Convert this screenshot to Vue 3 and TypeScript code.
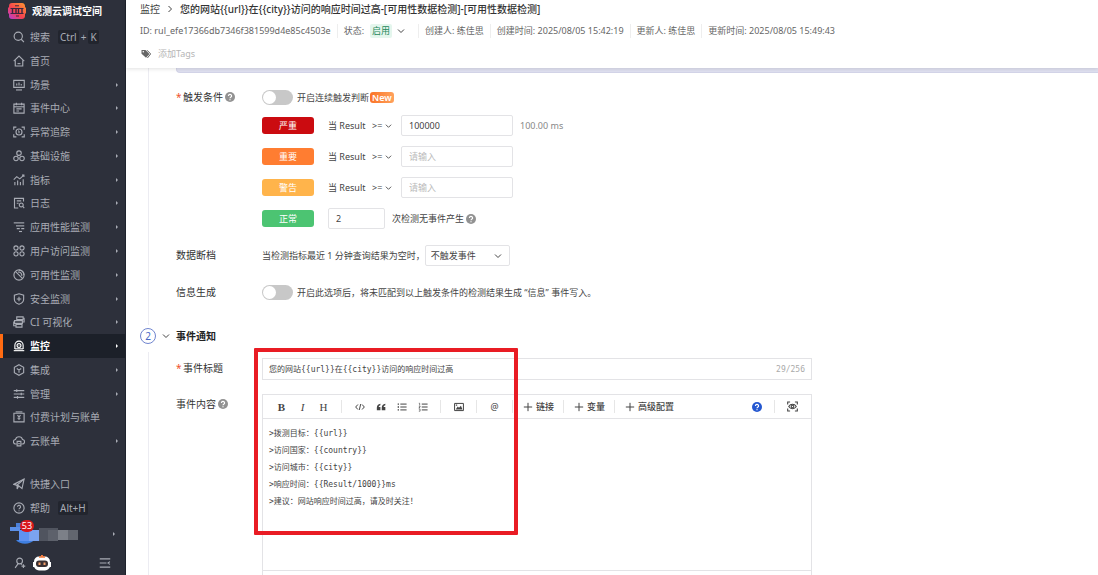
<script setup lang="ts">
import { ref } from 'vue'

interface NavItem {
  label: string
  icon: string
  arrow: boolean
  active?: boolean
}

interface Level {
  key: string
  label: string
  value: string
  unit?: string
}

const icons: Record<string, string[]> = {
  search: ['M7 1.5a5.5 5.5 0 1 0 0 11a5.5 5.5 0 1 0 0-11z', 'M11 11l3.6 3.8'],
  home: ['M1 8.2L8 1.4l7 6.8', 'M3 7v7.6h10V7', 'M6 11.5h4'],
  scene: ['M1 1.8h14v9.4H1z', 'M4 14.6h8', 'M5 6v2.6M8 4.8v3.8M11 6.6v2'],
  event: ['M1.2 2.8h13.6v12H1.2z', 'M1.2 6.4h13.6', 'M4.5 1v3.4M11.5 1v3.4', 'M4.5 9.2h7M4.5 12h3.5'],
  trace: ['M1 5V1.5h3.5M11.5 1.5H15V5M15 11v3.5h-3.5M4.5 14.5H1V11', 'M8 4a4 4 0 1 0 0 8a4 4 0 1 0 0-8z', 'M8 6.5v3M7 7l1-.6'],
  infra: ['M8 1.2a3 3 0 1 0 0 6a3 3 0 1 0 0-6z', 'M4 8.4a3 3 0 1 0 0 6a3 3 0 1 0 0-6z', 'M12 8.4a3 3 0 1 0 0 6a3 3 0 1 0 0-6z'],
  metric: ['M2.5 15v-4.5M6.2 15V8.5M9.9 15v-4.5M13.6 15V7', 'M1 7.5l4-4 4 3 5.5-5', 'M12 1.5h2.5V4'],
  log: ['M14 6V1.8H2v12.8h5', 'M5 5.2h6M5 8.4h2.5', 'M11 8a2.6 2.6 0 1 0 0 5.2a2.6 2.6 0 1 0 0-5.2z', 'M13 12.5l2 2.3'],
  apm: ['M1 2.5h14', 'M4 6.5h11', 'M5 10.2h4M11 10.2h4', 'M8 14h4'],
  rum: ['M4 1.2a2.8 2.8 0 1 0 0 5.6a2.8 2.8 0 1 0 0-5.6z', 'M12 1.2a2.8 2.8 0 1 0 0 5.6a2.8 2.8 0 1 0 0-5.6z', 'M4 9a2.8 2.8 0 1 0 0 5.6A2.8 2.8 0 1 0 4 9z', 'M12 9a2.8 2.8 0 1 0 0 5.6A2.8 2.8 0 1 0 12 9z'],
  avail: ['M8 1.2a6.8 6.8 0 1 0 0 13.6a6.8 6.8 0 1 0 0-13.6z', 'M3.5 3.5l9 9', 'M6.5 4.2c3-.8 5.6 2 5.2 5', 'M8 1.5c4 0 6.5 3 6.5 6.5'],
  security: ['M8 1l6.2 1.8v5.4c0 3.2-2.7 5.5-6.2 6.8c-3.5-1.3-6.2-3.6-6.2-6.8V2.8z', 'M8 5v6M5 8h6'],
  ci: ['M5 1.2h8.5v3.6H5z', 'M2 6.2h10.5v3.6H2z', 'M4 11.2h8v3.6H4z', 'M13.5 3h1.3v5h-2.3M2 8H1v5h3'],
  monitor: ['M2.5 12V7a5.5 5.5 0 0 1 11 0v5', 'M1 14.2h14', 'M2.5 11.8h11', 'M8 4.8a2.6 2.6 0 1 0 0 5.2a2.6 2.6 0 1 0 0-5.2z', 'M8 7v.6'],
  integrate: ['M8 1l6.2 3.5v7L8 15l-6.2-3.5v-7z', 'M5 6l3 2 3-2M8 8v3.8'],
  manage: ['M1 3.5h14M1 8h14M1 12.5h14', 'M5 1.8v3.4M11 6.3v3.4M6 10.8v3.4'],
  billing: ['M1.2 3h13.6v11.5H1.2z', 'M3.5 1.2h9', 'M6 5.5l2 2.5 2-2.5M8 8v4M6 9.6h4'],
  cloud: ['M5 12H3.8a3 3 0 0 1-.4-6a4.7 4.7 0 0 1 9.2 0a3 3 0 0 1-.4 6H11', 'M5.5 8.5h5v6h-5z', 'M7 11.5h2'],
  send: ['M1 8.5L14.8 1.5L12 14l-4.5-3.5z', 'M14.8 1.5L5.5 9.5v5l2-4'],
  help: ['M8 1.2a6.8 6.8 0 1 0 0 13.6a6.8 6.8 0 1 0 0-13.6z', 'M6 6.4a2 2 0 1 1 2.9 1.8c-.6.3-.9.7-.9 1.4', 'M8 11.3v.9'],
  invite: ['M7.5 1.5a3.8 3.8 0 1 0 0 7.6a3.8 3.8 0 1 0 0-7.6z', 'M5.5 8.8L1.5 14.5', 'M9.5 8.8l1 1.4', 'M10 12.2h5M12.5 9.7v5'],
  collapse: ['M1 2.5h14M1 8h9M1 13.5h14', 'M14.5 6.2L12 8l2.5 1.8'],
  scan: ['M1 5V1.5h3.5M11.5 1.5H15V5M15 11v3.5h-3.5M4.5 14.5H1V11', 'M2.5 8c2.8-4.3 8.2-4.3 11 0c-2.8 4.3-8.2 4.3-11 0z', 'M8 6.2a1.8 1.8 0 1 0 0 3.6a1.8 1.8 0 1 0 0-3.6z'],
}

const nav: NavItem[] = [
  { label: '首页', icon: 'home', arrow: false },
  { label: '场景', icon: 'scene', arrow: true },
  { label: '事件中心', icon: 'event', arrow: true },
  { label: '异常追踪', icon: 'trace', arrow: true },
  { label: '基础设施', icon: 'infra', arrow: true },
  { label: '指标', icon: 'metric', arrow: true },
  { label: '日志', icon: 'log', arrow: true },
  { label: '应用性能监测', icon: 'apm', arrow: true },
  { label: '用户访问监测', icon: 'rum', arrow: true },
  { label: '可用性监测', icon: 'avail', arrow: true },
  { label: '安全监测', icon: 'security', arrow: true },
  { label: 'CI 可视化', icon: 'ci', arrow: true },
  { label: '监控', icon: 'monitor', arrow: true, active: true },
  { label: '集成', icon: 'integrate', arrow: true },
  { label: '管理', icon: 'manage', arrow: true },
  { label: '付费计划与账单', icon: 'billing', arrow: false },
  { label: '云账单', icon: 'cloud', arrow: true },
]

const levels = ref<Level[]>([
  { key: 'critical', label: '严重', value: '100000', unit: '100.00 ms' },
  { key: 'error', label: '重要', value: '' },
  { key: 'warning', label: '警告', value: '' },
])

const meta = ['创建人: 练佳思', '创建时间: 2025/08/05 15:42:19', '更新人: 练佳思', '更新时间: 2025/08/05 15:49:43']
const inserts = ['链接', '变量', '高级配置']

const continuous = ref(false)
const infoEvents = ref(false)
const recoverCount = ref('2')
const title = ref('您的网站{{url}}在{{city}}访问的响应时间过高')
const content = ref(
  [
    '>拨测目标：{{url}}',
    '>访问国家：{{country}}',
    '>访问城市：{{city}}',
    '>响应时间：{{Result/1000}}ms',
    '>建议：网站响应时间过高，请及时关注！',
  ].join('\n'),
)
const crumb = '您的网站{{url}}在{{city}}访问的响应时间过高-[可用性数据检测]-[可用性数据检测]'
</script>

<template>
  <div class="app">
    <aside class="sidebar">
      <div class="brand">
        <svg class="logo" viewBox="0 0 18 16" aria-hidden="true">
          <defs>
            <linearGradient id="brandFill" x1="0" y1="1" x2="1" y2="0">
              <stop offset="0" stop-color="#b13be0" />
              <stop offset=".45" stop-color="#f5434f" />
              <stop offset="1" stop-color="#ff9a2e" />
            </linearGradient>
          </defs>
          <path d="M4 0h10c2 0 3 1.500 3 3v1.500h1v6h-1V13c0 2-1.500 3-3 3H4c-2 0-3-1-3-3v-2.500H0v-6h1V3c0-2 1-3 3-3z" fill="url(#brandFill)" />
          <path d="M2.500 5.500h13M2.500 10.500h13M7 2.800h4" stroke="#3a2640" fill="none" />
          <path d="M4.500 6v4M8 6v4M10.500 6v4M14 6v4" stroke="#3a2640" stroke-width="1.400" />
          <path d="M8 13h3" stroke="#3a2640" />
        </svg>
        <strong>观测云调试空间</strong>
      </div>
      <button class="item" type="button">
        <svg class="icon" viewBox="0 0 16 16"><path v-for="d in icons.search" :key="d" :d="d" /></svg>
        <span>搜索</span>
        <span class="keys"><kbd>Ctrl</kbd>+<kbd>K</kbd></span>
      </button>
      <nav class="nav">
        <a v-for="n in nav" :key="n.label" href="#" class="item" :class="{ active: n.active }">
          <svg class="icon" viewBox="0 0 16 16"><path v-for="d in icons[n.icon]" :key="d" :d="d" /></svg>
          <span>{{ n.label }}</span>
          <i v-if="n.arrow" class="arrow"></i>
        </a>
      </nav>
      <div class="bottom">
        <a href="#" class="item">
          <svg class="icon" viewBox="0 0 16 16"><path v-for="d in icons.send" :key="d" :d="d" /></svg>
          <span>快捷入口</span>
        </a>
        <a href="#" class="item">
          <svg class="icon" viewBox="0 0 16 16"><path v-for="d in icons.help" :key="d" :d="d" /></svg>
          <span>帮助</span>
          <span class="keys"><kbd>Alt+H</kbd></span>
        </a>
        <div class="item user">
          <svg class="avatar" viewBox="0 0 70 22" aria-hidden="true">
            <path d="M6 0h16v6H6z" fill="#4a7fd8" />
            <path d="M0 4h10v4H0z" fill="#5b8fe6" />
            <path d="M6 17h18c-4 5-14 5-18 0z" fill="#3f7fe0" />
            <path d="M9 7h20v11H9z" fill="#5f92f2" />
            <path d="M19 7h10v11H19z" fill="#7ba3f0" />
            <path d="M29 5h19v13H29z" fill="#50545f" />
            <path d="M38 7h10v11H38z" fill="#5d616b" />
            <path d="M48 7h10v10H48z" fill="#7c8088" />
            <path d="M58 7h10v10H58z" fill="#62666f" />
          </svg>
          <span class="badge">53</span>
          <i class="arrow"></i>
        </div>
        <div class="tools">
          <button type="button" aria-label="邀请成员">
            <svg class="icon" viewBox="0 0 16 16"><path v-for="d in icons.invite" :key="d" :d="d" /></svg>
          </button>
          <button type="button" aria-label="智能助手">
            <svg class="robot" viewBox="0 0 18 16">
              <rect x="1" y="1.500" width="16" height="14" rx="5" fill="#fff" />
              <path d="M0 7h2v5H0zM16 7h2v5h-2z" fill="#fff" />
              <path d="M6 1.200h6v1.600H6zM8 0h2v2H8z" fill="#f47b3d" />
              <rect x="3" y="5.500" width="12" height="6.500" rx="3" fill="#3b3032" />
              <path d="M5.500 7.500h2v2.500h-2zM10.500 7.500h2v2.500h-2z" fill="#f6a06a" />
            </svg>
          </button>
          <button class="collapse" type="button" aria-label="收起菜单">
            <svg class="icon" viewBox="0 0 16 16"><path v-for="d in icons.collapse" :key="d" :d="d" /></svg>
          </button>
        </div>
      </div>
    </aside>

    <main class="main">
      <header class="header">
        <div class="crumbs">
          <a href="#">监控</a>
          <svg class="chev" viewBox="0 0 8 8"><path d="M2.500 1l3 3-3 3" /></svg>
          <span class="current">{{ crumb }}</span>
        </div>
        <div class="meta">
          <span>ID: rul_efe17366db7346f381599d4e85c4503e</span>
          <span class="state">状态:
            <button type="button"><b>启用</b><svg class="chev" viewBox="0 0 8 8"><path d="M1 2.500l3 3 3-3" /></svg></button>
          </span>
          <span v-for="m in meta" :key="m">{{ m }}</span>
        </div>
        <button class="tags" type="button">
          <svg viewBox="0 0 10 10"><path d="M.5 1h4l4 4-3.500 3.800L.5 4.800z" fill="#666" /><path d="M6 1.200l3.700 3.700L6.400 9" fill="none" stroke="#666" /><circle cx="2.300" cy="2.800" r=".8" fill="#fff" /></svg>
          <span>添加Tags</span>
        </button>
      </header>

      <div class="content">
        <section class="step first">
          <div class="banner"></div>
          <div class="row">
            <span class="label"><em>*</em>触发条件<svg class="q" viewBox="0 0 16 16"><circle cx="8" cy="8" r="8" /><path d="M5.500 6.300a2.500 2.500 0 1 1 3.600 2.200c-.8.400-1.100.8-1.100 1.500M8 11.500v1.500" /></svg></span>
            <div class="levels">
              <label class="line"><input v-model="continuous" type="checkbox" role="switch" class="switch" />开启连续触发判断<span class="new">New</span></label>
              <div v-for="l in levels" :key="l.key" class="line">
                <span class="tag" :class="l.key">{{ l.label }}</span>
                <span class="result">当 Result</span>
                <span class="pick op">
                  <select :aria-label="l.label + '运算符'"><option>&gt;=</option><option>&gt;</option><option>&lt;</option></select>
                  <svg class="chev" viewBox="0 0 8 8"><path d="M1 2.500l3 3 3-3" /></svg>
                </span>
                <input v-model="l.value" class="text" type="text" placeholder="请输入" :aria-label="l.label + '阈值'" />
                <span v-if="l.unit" class="unit">{{ l.unit }}</span>
              </div>
              <label class="line">
                <span class="tag ok">正常</span>
                <input v-model="recoverCount" class="text count" type="text" />
                次检测无事件产生
                <svg class="q" viewBox="0 0 16 16"><circle cx="8" cy="8" r="8" /><path d="M5.500 6.300a2.500 2.500 0 1 1 3.600 2.200c-.8.400-1.100.8-1.100 1.500M8 11.500v1.500" /></svg>
              </label>
            </div>
          </div>
          <div class="row">
            <label class="label" for="gap">数据断档</label>
            <div class="line">
              当检测指标最近 1 分钟查询结果为空时，
              <span class="pick gap">
                <select id="gap"><option>不触发事件</option><option>触发事件</option></select>
                <svg class="chev" viewBox="0 0 8 8"><path d="M1 2.500l3 3 3-3" /></svg>
              </span>
            </div>
          </div>
          <div class="row">
            <span class="label">信息生成</span>
            <label class="line"><input v-model="infoEvents" type="checkbox" role="switch" class="switch" />开启此选项后，将未匹配到以上触发条件的检测结果生成 “信息” 事件写入。</label>
          </div>
        </section>

        <h2 class="heading">
          <span class="num">2</span>
          <svg class="chev" viewBox="0 0 8 8"><path d="M1 2.500l3 3 3-3" /></svg>
          事件通知
        </h2>

        <section class="step second">
          <div class="marker"></div>
          <div class="row">
            <label class="label" for="title"><em>*</em>事件标题</label>
            <div class="title-box">
              <input id="title" v-model="title" type="text" maxlength="256" />
              <span>{{ title.length }}/256</span>
            </div>
          </div>
          <div class="row">
            <label class="label" for="body">事件内容<svg class="q" viewBox="0 0 16 16"><circle cx="8" cy="8" r="8" /><path d="M5.500 6.300a2.500 2.500 0 1 1 3.600 2.200c-.8.400-1.100.8-1.100 1.500M8 11.500v1.500" /></svg></label>
            <div class="editor">
              <div class="toolbar">
                <button type="button" class="serif bold">B</button>
                <button type="button" class="serif italic">I</button>
                <button type="button" class="serif">H</button>
                <i class="sep"></i>
                <button type="button" aria-label="代码"><svg viewBox="0 0 12 12"><path d="M3.500 3L.8 6l2.700 3M8.500 3l2.700 3-2.700 3M6.800 2.500l-1.600 7" /></svg></button>
                <button type="button" aria-label="引用"><svg viewBox="0 0 12 12"><path class="solid" d="M5.300 2C2.500 2.300 1 4.200 1 7v3h4.300V6H3.200c.1-1.200.8-1.900 2.100-2.200zM11.200 2C8.400 2.300 6.900 4.200 6.900 7v3h4.300V6H9.100c.1-1.200.8-1.900 2.100-2.200z" /></svg></button>
                <button type="button" aria-label="无序列表"><svg viewBox="0 0 12 12"><path d="M4 2.500h7.500M4 6h7.500M4 9.500h7.500" /><path class="solid" d="M.8 1.700h1.600v1.600H.8zM.8 5.200h1.600v1.600H.8zM.8 8.700h1.600v1.600H.8z" /></svg></button>
                <button type="button" aria-label="有序列表"><svg viewBox="0 0 12 12"><path d="M4.500 2.500h7M4.500 6h7M4.500 9.500h7" /><path class="thin" d="M1 1.500h1V4M1 5h1.500v1L1 7h1.500M1 8.500h1.500v2.500H1" /></svg></button>
                <i class="sep"></i>
                <button type="button" aria-label="图片"><svg viewBox="0 0 12 12"><path d="M.7 1.700h10.600v8.600H.7z" /><path class="solid" d="M2 9l2.500-3.500L6 7l2.300-2.500L10.200 9zM2.200 3h1.600v1.600H2.200z" /></svg></button>
                <i class="sep"></i>
                <button type="button">@</button>
                <template v-for="w in inserts" :key="w">
                  <i class="sep"></i>
                  <button type="button" class="insert"><svg viewBox="0 0 12 12"><path d="M6 1v10M1 6h10" /></svg>{{ w }}</button>
                </template>
                <button type="button" class="end" aria-label="帮助"><svg class="q blue" viewBox="0 0 16 16"><circle cx="8" cy="8" r="8" /><path d="M5.500 6.300a2.500 2.500 0 1 1 3.600 2.200c-.8.400-1.100.8-1.100 1.500M8 11.500v1.500" /></svg></button>
                <i class="sep"></i>
                <button type="button" aria-label="预览"><svg class="scan" viewBox="0 0 16 16"><path v-for="d in icons.scan" :key="d" :d="d" /></svg></button>
              </div>
              <textarea id="body" v-model="content" spellcheck="false"></textarea>
              <div class="editor-foot"></div>
            </div>
          </div>
        </section>
      </div>
    </main>
  </div>
</template>

<style>
html,
body {
  margin: 0;
  background: #fff;
}
</style>

<style scoped>
.app {
  display: flex;
  height: 100vh;
  overflow: hidden;
  background: #fff;
  color: #444;
  font: 9px/14px "Noto Sans", "Noto Sans CJK SC", sans-serif;
}
.app * {
  box-sizing: border-box;
}
button,
input,
select,
textarea {
  margin: 0;
  padding: 0;
  border: 0;
  background: none;
  color: inherit;
  font: inherit;
  outline: 0;
}
select {
  appearance: none;
}
a {
  color: inherit;
  text-decoration: none;
}
svg {
  display: block;
  flex: none;
}

/* Sidebar */
.sidebar {
  display: flex;
  flex: none;
  flex-direction: column;
  width: 126px;
  border-right: 1px solid #1e222c;
  background: #2d303b;
  color: #a9acb5;
  font-size: 10px;
}
.brand {
  display: flex;
  align-items: center;
  gap: 6px;
  height: 25px;
  padding: 0 0 4px 8px;
  color: #fff;
}
.logo {
  width: 18px;
  height: 16px;
}
.item {
  position: relative;
  display: flex;
  flex: none;
  align-items: center;
  width: 100%;
  height: 24px;
  padding-left: 13px;
  text-align: left;
  white-space: nowrap;
}
.icon {
  width: 12px;
  height: 12px;
  margin-right: 5px;
  fill: none;
  stroke: currentColor;
  stroke-width: 1.5;
}
.keys {
  display: flex;
  gap: 2px;
  margin-left: 8px;
}
kbd {
  padding: 0 2px;
  border-radius: 2px;
  background: #22252e;
  font: inherit;
}
.nav {
  display: grid;
  flex: 1;
  grid-auto-rows: 1fr;
  margin-bottom: 19px;
}
.nav .item {
  height: auto;
}
.item.active {
  background: #1c2029;
  color: #fff;
  font-weight: 700;
}
.item.active::before {
  content: "";
  position: absolute;
  inset: 0 auto 0 0;
  width: 3px;
  background: #ff6b12;
}
.arrow {
  margin: 0 7px 0 auto;
  border: 2px solid transparent;
  border-left-color: currentColor;
  border-right: 0;
}
.bottom {
  flex: none;
}
.user {
  height: 28px;
  padding-left: 10px;
}
.avatar {
  width: 70px;
  height: 22px;
}
.user .arrow {
  margin-right: 10px;
}
.badge {
  position: absolute;
  top: 0;
  left: 20px;
  width: 14px;
  border-radius: 6px;
  background: #d9161c;
  color: #fff;
  font-size: 9px;
  line-height: 12px;
  text-align: center;
}
.tools {
  display: flex;
  align-items: center;
  gap: 2px;
  height: 27px;
  padding: 2px 10px 0 14px;
}
.robot {
  width: 18px;
  height: 16px;
}
.collapse {
  margin-left: auto;
}
.collapse .icon {
  margin-right: 4px;
}

/* Header */
.main {
  display: flex;
  flex: 1;
  flex-direction: column;
  min-width: 0;
}
.header {
  position: relative;
  z-index: 1;
  display: flex;
  flex: none;
  flex-direction: column;
  height: 68px;
  padding-left: 14px;
  background: #fff;
  box-shadow: 0 1px 4px rgba(0, 0, 0, 0.12);
  white-space: nowrap;
}
.chev {
  width: 8px;
  height: 8px;
  fill: none;
  stroke: #444;
}
.crumbs {
  display: flex;
  align-items: center;
  gap: 6px;
  height: 18px;
  font-size: 10px;
}
.current {
  color: #333;
  font-weight: 500;
}
.meta {
  display: flex;
  align-items: center;
  height: 26px;
  color: #666;
}
.meta > span + span {
  margin-left: 6px;
  padding-left: 6px;
  border-left: 1px solid #eee;
}
.state {
  display: flex;
  gap: 6px;
}
.state button {
  display: flex;
  align-items: center;
  gap: 5px;
  margin-right: 7px;
}
.state b {
  padding: 0 2px;
  border-radius: 2px;
  background: #e4f6ed;
  color: #25885b;
  font-weight: 400;
}
.tags {
  display: flex;
  align-items: center;
  gap: 7px;
  height: 20px;
  padding-left: 1px;
  color: #b5b5b5;
}
.tags svg {
  width: 10px;
  height: 10px;
}

/* Form */
.content {
  flex: 1;
  min-height: 0;
  overflow: hidden;
}
.step {
  position: relative;
  display: flex;
  flex-direction: column;
  margin-left: 22px;
  padding-left: 27px;
  border-left: 1px solid #ececf2;
}
.banner {
  height: 5px;
  margin-bottom: 14px;
  border-bottom: 1px solid #d3d4e8;
  border-left: 1px solid #d3d4e8;
  border-radius: 0 0 0 4px;
  background: #dfe0f0;
}
.row {
  display: grid;
  grid-template-columns: 86px minmax(0, 1fr);
}
.first {
  padding-bottom: 22px;
}
.first .row + .row {
  margin-top: 16px;
}
.label {
  display: flex;
  align-items: center;
  height: 20px;
  color: #333;
  font-size: 10px;
}
.label em {
  width: 7px;
  color: #f0532d;
  font-style: normal;
}
.label .q {
  margin-left: 2px;
}
.q {
  width: 10px;
  height: 10px;
  fill: #929292;
}
.q path {
  fill: none;
  stroke: #fff;
  stroke-width: 2;
}
.levels {
  display: grid;
  gap: 10px;
}
.levels .line:first-child {
  margin-bottom: -3px;
}
.line {
  display: flex;
  align-items: center;
  height: 21px;
  white-space: nowrap;
}
.switch {
  flex: none;
  width: 31px;
  height: 15px;
  margin-right: 4px;
  padding: 1px;
  border-radius: 8px;
  background: #c8c8c8;
  appearance: none;
}
.switch::before {
  content: "";
  display: block;
  width: 13px;
  height: 13px;
  border-radius: 50%;
  background: #fff;
}
.switch:checked {
  background: #2f61d5;
}
.switch:checked::before {
  margin-left: auto;
}
.new {
  margin-left: 1px;
  padding: 0 2px;
  border-radius: 3px;
  background: linear-gradient(90deg, #fa7327, #ffa25c);
  color: #fff;
  font-weight: 600;
  line-height: 11px;
}
.tag {
  width: 52px;
  margin-right: 14px;
  border-radius: 3px;
  color: #fff;
  line-height: 17px;
  text-align: center;
}
.critical {
  background: #cb0b10;
}
.error {
  background: #ff7d31;
}
.warning {
  background: #ffb44b;
}
.ok {
  background: #4cc472;
}
.result {
  width: 44px;
}
.pick {
  position: relative;
  display: flex;
  align-items: center;
}
.pick .chev {
  position: absolute;
  right: 0;
  pointer-events: none;
}
.pick select {
  width: 100%;
}
.op {
  width: 20px;
  margin-right: 9px;
}
.op .chev {
  width: 7px;
}
.text,
.gap {
  height: 21px;
  border: 1px solid #e3e3e6;
  border-radius: 2px;
}
.text {
  width: 112px;
  padding: 0 7px;
}
.text::placeholder {
  color: #bbb;
}
.count {
  width: 57px;
  margin-right: 7px;
}
.line .q {
  margin-left: 2px;
}
.unit {
  margin-left: 7px;
  color: #888;
}
.gap {
  width: 85px;
}
.gap select {
  height: 100%;
  padding-left: 5px;
}
.gap .chev {
  right: 7px;
}
.heading {
  display: flex;
  align-items: center;
  height: 16px;
  margin: 3px 0 8px 14px;
  color: #222;
  font-size: 10px;
}
.num {
  width: 16px;
  height: 16px;
  margin-right: 6px;
  border: 1px solid #7085cf;
  border-radius: 50%;
  color: #4765c4;
  font-weight: 400;
  line-height: 14px;
  text-align: center;
}
.heading .chev {
  margin-right: 6px;
}
.second {
  gap: 14px;
  padding-top: 6px;
}
.title-box,
.editor {
  max-width: 550px;
  border: 1px solid #e3e3e6;
  color: #444;
  font: 8px/17px "DejaVu Sans Mono", "Noto Sans CJK SC", monospace;
}
.title-box {
  display: flex;
  align-items: center;
  height: 22px;
  padding: 0 6px;
}
.title-box input {
  flex: 1;
  min-width: 0;
}
.title-box span {
  color: #aaa;
}
.toolbar {
  display: flex;
  align-items: center;
  height: 24px;
  padding: 0 8px;
  border-bottom: 1px solid #e3e3e6;
  font: 9px/14px "Noto Sans", "Noto Sans CJK SC", sans-serif;
}
.toolbar button {
  display: flex;
  flex: none;
  align-items: center;
  justify-content: center;
  width: 21px;
}
.toolbar svg {
  width: 10px;
  height: 10px;
  fill: none;
  stroke: #444;
  stroke-width: 1.2;
}
.toolbar .solid {
  fill: #444;
  stroke: none;
}
.toolbar .thin {
  stroke-width: 0.8;
}
.toolbar .serif {
  font-family: "Liberation Serif", serif;
  font-size: 11px;
}
.toolbar .bold {
  font-weight: 700;
}
.toolbar .italic {
  font-style: italic;
}
.toolbar .insert {
  gap: 3px;
  width: auto;
  padding: 0 2px 0 3px;
  font-weight: 500;
}
.toolbar .end {
  margin-left: auto;
}
.toolbar .blue {
  fill: #2457d0;
  stroke: none;
}
.toolbar .blue path {
  stroke: #fff;
  stroke-width: 2;
}
.toolbar .scan {
  width: 11px;
  height: 11px;
  stroke-width: 1.6;
}
.sep {
  width: 1px;
  height: 13px;
  margin: 0 7px;
  background: #e6e6e6;
}
textarea {
  display: block;
  width: 100%;
  height: 152px;
  padding: 6px;
  border-bottom: 1px solid #e3e3e6;
  resize: none;
}
.editor-foot {
  height: 24px;
}

/* Highlight frame over the title and content fields */
.marker {
  position: absolute;
  z-index: 1;
  top: -4px;
  left: 105px;
  width: 264px;
  height: 187px;
  border: 4px solid #e91c24;
  border-radius: 1px;
  pointer-events: none;
}
</style>
